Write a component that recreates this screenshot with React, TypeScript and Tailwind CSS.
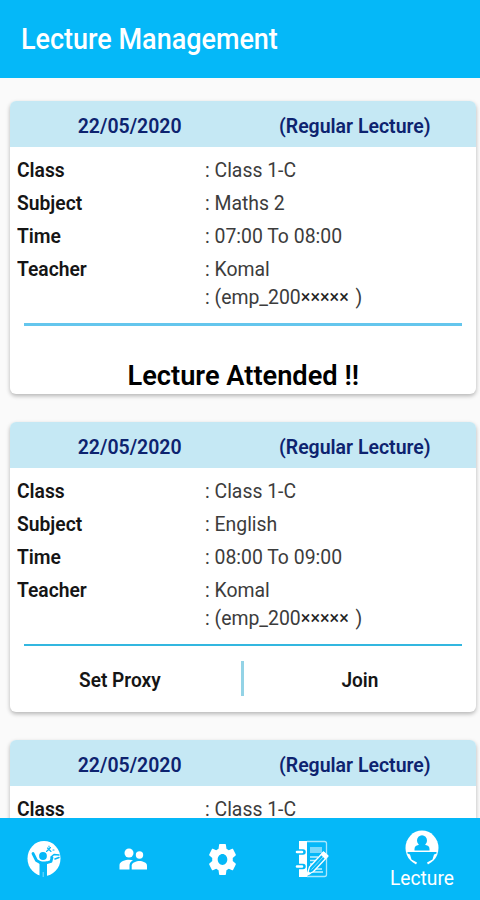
import React from "react";

type TextProps = { children: React.ReactNode; className?: string };

// Roboto drawn slightly condensed, anchored on its left edge or its centre.
function Txt({ children, className = "" }: TextProps) {
  return <span className={`inline-block whitespace-pre ${className}`}>{children}</span>;
}

type Lecture = { id: number; rows: [string, string][]; footer: "attended" | "actions" | "none" };

const lectures: Lecture[] = [
  {
    id: 1,
    rows: [["Class", "Class 1-C"], ["Subject", "Maths 2"], ["Time", "07:00 To 08:00"], ["Teacher", "Komal"]],
    footer: "attended",
  },
  {
    id: 2,
    rows: [["Class", "Class 1-C"], ["Subject", "English"], ["Time", "08:00 To 09:00"], ["Teacher", "Komal"]],
    footer: "actions",
  },
  { id: 3, rows: [["Class", "Class 1-C"]], footer: "none" },
];

function Row({ label, value }: { label: string; value: string }) {
  return (
    <div className="flex h-[33px] items-center text-[20.5px] leading-none">
      <div className="w-[188px] font-semibold text-[#151515]">
        <Txt className="origin-left scale-x-[.94]">{label}</Txt>
      </div>
      <div className="text-[#3c3c3c]">
        <Txt className="origin-left scale-x-[.946]">{": " + value}</Txt>
      </div>
    </div>
  );
}

function Card({ lecture }: { lecture: Lecture }) {
  const { footer } = lecture;
  const height = footer === "attended" ? "h-[293px]" : footer === "actions" ? "h-[290px]" : "h-[120px]";
  return (
    <section
      className={`w-[466px] shrink-0 overflow-hidden rounded-[6px] bg-white shadow-[0_2px_4px_rgba(0,0,0,.28)] ${height}`}
    >
      <header className="flex h-[46px] items-center bg-[#c5e8f4] pt-[4px] text-[20.5px] leading-none font-semibold text-[#0d236f]">
        <div className="flex w-[240px] justify-center">
          <Txt className="scale-x-[.95]">22/05/2020</Txt>
        </div>
        <div className="flex w-[210px] justify-center">
          <Txt className="scale-x-[.95]">(Regular Lecture)</Txt>
        </div>
      </header>
      <div className="pt-[7px] pl-[7px]">
        {lecture.rows.map(([label, value]) => (
          <Row key={label} label={label} value={value} />
        ))}
        {footer !== "none" && (
          <div className="flex h-[23px] items-center pl-[188px] text-[20.5px] leading-none text-[#3c3c3c]">
            <Txt className="origin-left scale-x-[.946]">
              : (emp_200<span className="relative -top-px text-[19px] text-[#222]">×××××</span>
              <span className="pl-[2px]"> )</span>
            </Txt>
          </div>
        )}
      </div>
      {footer === "attended" && (
        <>
          <div className="mt-[14px] ml-[14px] h-[3px] w-[438px] bg-[#64c6ed]" />
          <div className="flex justify-center pt-[36px] text-[28.5px] leading-none font-semibold text-black">
            <Txt className="scale-x-[.955]">Lecture Attended !!</Txt>
          </div>
        </>
      )}
      {footer === "actions" && (
        <>
          <div className="mt-[14px] ml-[14px] h-[2px] w-[438px] bg-[#33b7e0]" />
          <div className="flex h-[66px] items-center text-[20.5px] leading-none font-semibold text-[#151515]">
            <div className="flex w-[231px] justify-center pt-[2px] pr-[12px]">
              <Txt className="scale-x-[.93]">Set Proxy</Txt>
            </div>
            <div className="mb-[2px] h-[35px] w-[3px] bg-[#93d3e6]" />
            <div className="flex w-[231px] justify-center pt-[2px]">
              <Txt className="scale-x-[.93]">Join</Txt>
            </div>
          </div>
        </>
      )}
    </section>
  );
}

function CelebrateIcon() {
  return (
    <svg width="34" height="38" viewBox="0 0 34 38">
      <ellipse cx="17" cy="18.500" rx="16.500" ry="17.500" fill="#fff" />
      <g fill="none" stroke="#05b8f8" strokeLinecap="round" strokeLinejoin="round">
        <path d="M6 13.500 9.500 20.500 14 23M19 23l5-1.500 1-4" strokeWidth="2.800" />
        <path d="M24 17l3-2.500 5 .5M28 19l4-1.500" strokeWidth="1.500" />
        <path d="M19.500 11.500l4-4M20.500 8l3.500 3.500M22 6v1M26 10h1" strokeWidth="1.100" />
      </g>
      <circle cx="16" cy="16" r="3.900" fill="#05b8f8" />
      <path d="M12.500 21.500h7.500v15.500h-7.500z" fill="#05b8f8" />
      <path d="M16.200 32v5" stroke="#8fe0fb" strokeWidth=".9" />
    </svg>
  );
}

function PeopleIcon() {
  return (
    <svg width="29" height="22" viewBox="0 0 29 22" fill="#fff">
      <circle cx="10" cy="5" r="4.500" />
      <circle cx="20.500" cy="7" r="3.700" />
      <path d="M20.500 13c-3 0-7.800 1.500-7.800 4.500V21.500h15.300v-4c0-3-4.500-4.500-7.500-4.500z" />
      <path d="M14 12.300c-1.200-.3-2.600-.5-4-.5-3.400 0-9.500 1.700-9.500 5.200v4.500h10v-4c0-1.600.7-3.700 3.500-5.200z" />
    </svg>
  );
}

function GearIcon() {
  return (
    <svg width="33" height="37" viewBox="0 0 24 24" preserveAspectRatio="none" fill="#fff">
      <path d="M19.430 12.980c.04-.32.07-.64.07-.98s-.03-.66-.07-.98l2.110-1.650c.19-.15.24-.42.12-.64l-2-3.460c-.12-.22-.39-.3-.61-.22l-2.490 1c-.52-.4-1.080-.73-1.690-.98l-.38-2.650A.488.488 0 0 0 14 2h-4c-.25 0-.46.18-.49.42l-.38 2.650c-.61.25-1.170.59-1.690.98l-2.490-1c-.23-.09-.49 0-.61.22l-2 3.460c-.13.22-.07.49.12.64l2.110 1.650c-.04.32-.07.65-.07.98s.03.66.07.98l-2.110 1.650c-.19.15-.24.42-.12.64l2 3.460c.12.22.39.3.61.22l2.490-1c.52.4 1.080.73 1.690.98l.38 2.650c.03.24.24.42.49.42h4c.25 0 .46-.18.49-.42l.38-2.650c.61-.25 1.170-.59 1.690-.98l2.490 1c.23.09.49 0 .61-.22l2-3.460c.12-.22.07-.49-.12-.64l-2.110-1.650zM12 15.500c-1.930 0-3.500-1.570-3.500-3.500s1.570-3.500 3.500-3.500 3.500 1.570 3.500 3.500-1.570 3.500-3.500 3.500z" />
    </svg>
  );
}

function NotebookIcon() {
  return (
    <svg width="34" height="38" viewBox="0 0 34 38" fill="none">
      <path d="M4 1h8v36H4z" fill="#fff" />
      <path d="M12 1.500h17.500q2 0 2 2v31q0 2-2 2H12" stroke="#a9e7fd" strokeWidth="1.300" />
      <path d="M15 7h12v6H15z" fill="#7bd9fb" />
      <path d="M15 17h8M15 20.500h6M15 24h4M20 29h7M17 32h11" stroke="#c3effd" strokeWidth="1.300" />
      <path d="M3 12h5M3 26.500h5" stroke="#05b8f8" strokeWidth="5.500" strokeLinecap="round" />
      <path d="M2 12h5M2 26.500h5" stroke="#fff" strokeWidth="2.600" strokeLinecap="round" />
      <path d="M12 35l2.500-8 14-15 4.500 4-14.500 15.500z" fill="#05b8f8" stroke="#fff" strokeWidth="1.300" strokeLinejoin="round" />
      <path d="M25.500 14.500l3-3 4.500 4-3 3.500z" fill="#fff" />
      <path d="M16.500 29.500l11.500-12.500" stroke="#8bddfa" strokeWidth="1" />
      <path d="M11.500 36l1.700-5 3 2.700z" fill="#fff" />
    </svg>
  );
}

function LectureIcon() {
  return (
    <svg width="34" height="37" viewBox="0 0 34 37">
      <ellipse cx="17" cy="18" rx="16.500" ry="17.500" fill="#fff" />
      <g fill="#05b8f8">
        <ellipse cx="17" cy="10.500" rx="5" ry="5.200" />
        <path d="M9.500 20.500v-1.500q0-3.500 4-4h7q4 .5 4 4v1.500z" />
        <path d="M2.500 22h29v1.500l-2.500 1-1.500 5-5.500 3 2 4.500h-14l2-4.500-5.500-3-1.500-5-2.500-1z" />
      </g>
    </svg>
  );
}

export default function App() {
  return (
    <div className="flex h-[900px] w-[480px] flex-col overflow-hidden bg-[#fafafa] font-['Roboto','Liberation_Sans',sans-serif]">
      <header className="flex h-[78px] shrink-0 items-center bg-[#05b8f8] pl-[21px] text-[29px] leading-none font-medium text-white">
        <Txt className="origin-left scale-x-[.93]">Lecture Management</Txt>
      </header>
      <main className="flex h-[740px] shrink-0 flex-col gap-[28px] overflow-hidden pt-[23px] pl-[10px]">
        {lectures.map((lecture) => (
          <Card key={lecture.id} lecture={lecture} />
        ))}
      </main>
      <nav className="flex h-[82px] shrink-0 items-center bg-[#05b8f8]">
        <div className="flex w-[87px] justify-center"><CelebrateIcon /></div>
        <div className="flex w-[92px] justify-center"><PeopleIcon /></div>
        <div className="flex w-[86px] justify-center"><GearIcon /></div>
        <div className="flex w-[94px] justify-center"><NotebookIcon /></div>
        <div className="flex w-[121px] shrink-0 flex-col items-center gap-[1px] pl-[5px]">
          <LectureIcon />
          <div className="text-[21px] leading-none text-white">
            <Txt className="scale-x-[.915]">Lecture</Txt>
          </div>
        </div>
      </nav>
    </div>
  );
}
